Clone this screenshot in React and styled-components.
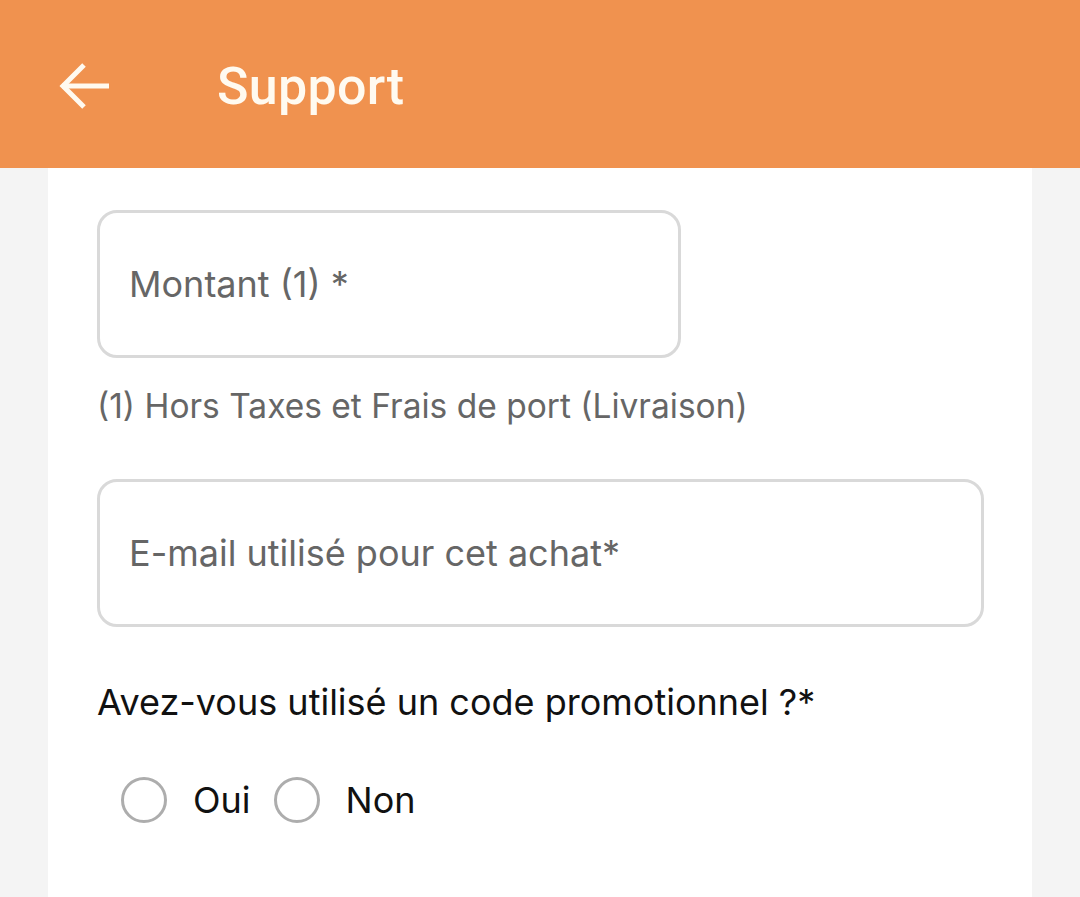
import styled, { createGlobalStyle } from "styled-components";

const GlobalStyle = createGlobalStyle`
  html, body {
    margin: 0;
    padding: 0;
    background: #f4f4f4;
    font-family: Inter, "Noto Sans", sans-serif;
  }
`;

const Page = styled.div`
  width: 1080px;
  height: 897px;
  display: flex;
  flex-direction: column;
  overflow: hidden;
  background: #f4f4f4;
`;

const TopBar = styled.header`
  height: 168px;
  flex-shrink: 0;
  background: #f0924f;
  display: flex;
  align-items: center;
  padding: 4px 0 0 58px;
  box-sizing: border-box;
`;

const BackButton = styled.button`
  width: 54px;
  height: 50px;
  padding: 0;
  border: none;
  background: none;
  display: flex;
  align-items: center;
  justify-content: flex-start;
  color: #fffaf0;
  cursor: pointer;
`;

const Title = styled.h1`
  margin: 0 0 0 105px;
  font-family: Roboto, Inter, sans-serif;
  font-weight: 500;
  font-size: 52px;
  color: #fffaf0;
  letter-spacing: 0.3px;
`;

const Card = styled.main`
  flex: 1;
  margin: 0 48px;
  background: #ffffff;
  padding: 42px 49px 0 49px;
  display: flex;
  flex-direction: column;
`;

const Field = styled.div`
  width: ${(p) => p.width};
  height: 148px;
  box-sizing: border-box;
  border: 3px solid #d9d9d9;
  border-radius: 20px;
  display: flex;
  align-items: center;
  padding: 0 0 0 29px;
`;

const Input = styled.input`
  width: 100%;
  border: none;
  outline: none;
  background: transparent;
  font-family: Inter, sans-serif;
  font-size: 36px;
  color: #222;
  padding: 0;
  &::placeholder {
    color: #666666;
  }
`;

const Hint = styled.p`
  margin: 28px 0 53px 0;
  font-size: 33.5px;
  color: #666666;
`;

const Question = styled.p`
  margin: 53px 0 0 0;
  font-size: 36px;
  color: #111111;
`;

const RadioRow = styled.div`
  display: flex;
  align-items: center;
  margin: 53px 0 0 24px;
`;

const RadioLabel = styled.label`
  display: flex;
  align-items: center;
  font-size: 36px;
  color: #111111;
  margin-right: 23px;
  cursor: pointer;
`;

const RadioDot = styled.span`
  width: 46px;
  height: 46px;
  box-sizing: border-box;
  border: 3px solid #adadad;
  border-radius: 50%;
  margin-right: 26px;
`;

export default function App() {
  return (
    <Page>
      <GlobalStyle />
      <TopBar>
        <BackButton aria-label="Retour">
          <svg width="52" height="48" viewBox="0 0 52 48" fill="none" stroke="currentColor" strokeWidth="5">
            <path d="M4 24H51" />
            <path d="M26 3L5 24L26 45" />
          </svg>
        </BackButton>
        <Title>Support</Title>
      </TopBar>
      <Card>
        <Field width="584px">
          <Input placeholder="Montant (1) *" />
        </Field>
        <Hint>(1) Hors Taxes et Frais de port (Livraison)</Hint>
        <Field width="887px">
          <Input placeholder="E-mail utilisé pour cet achat*" />
        </Field>
        <Question>Avez-vous utilisé un code promotionnel ?*</Question>
        <RadioRow>
          <RadioLabel>
            <RadioDot />
            Oui
          </RadioLabel>
          <RadioLabel>
            <RadioDot />
            Non
          </RadioLabel>
        </RadioRow>
      </Card>
    </Page>
  );
}
